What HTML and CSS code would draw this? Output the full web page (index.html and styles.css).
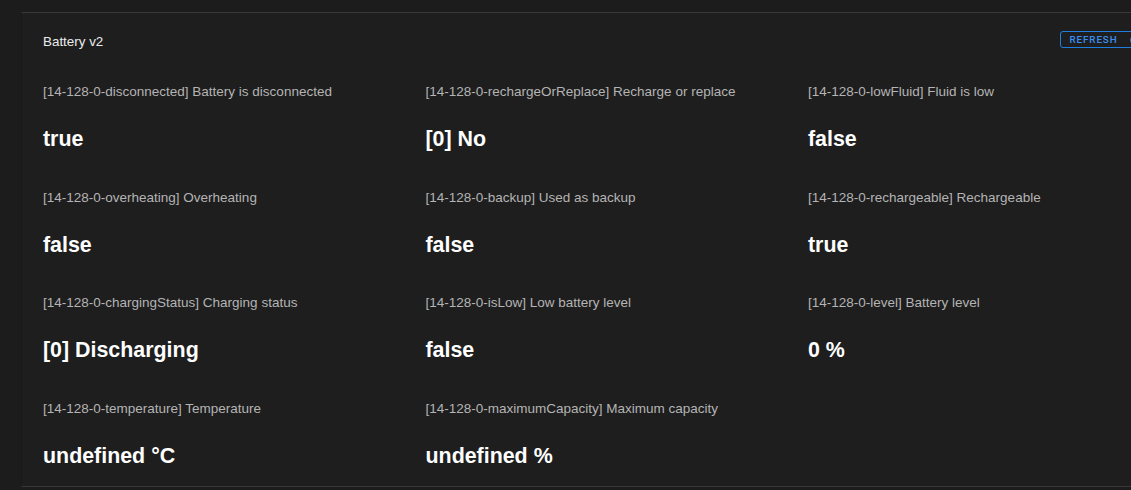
FILE: index.html
```html
<!DOCTYPE html>
<html lang="en">
<head>
    <meta charset="UTF-8">
    <meta name="viewport" content="width=device-width, initial-scale=1.0">
    <title>Battery v2</title>
    <link rel="stylesheet" href="styles.css">
</head>
<body>
    <div class="page">
        <section class="card">
            <header class="card-header">
                <h2 class="card-title">Battery v2</h2>
                <button type="button" class="refresh-btn">
                    REFRESH
                    <svg class="refresh-icon" viewBox="0 0 24 24" width="14" height="14">
                        <path d="M17.65 6.35A7.96 7.96 0 0 0 12 4a8 8 0 1 0 7.730 10h-2.08A6 6 0 1 1 12 6c1.66 0 3.14.69 4.22 1.78L13 11h7V4z" fill="currentColor"/>
                    </svg>
                </button>
            </header>
            <div class="values">
                <div class="value-item">
                    <div class="value-label">[14-128-0-disconnected] Battery is disconnected</div>
                    <div class="value-text">true</div>
                </div>
                <div class="value-item">
                    <div class="value-label">[14-128-0-rechargeOrReplace] Recharge or replace</div>
                    <div class="value-text">[0] No</div>
                </div>
                <div class="value-item">
                    <div class="value-label">[14-128-0-lowFluid] Fluid is low</div>
                    <div class="value-text">false</div>
                </div>
                <div class="value-item">
                    <div class="value-label">[14-128-0-overheating] Overheating</div>
                    <div class="value-text">false</div>
                </div>
                <div class="value-item">
                    <div class="value-label">[14-128-0-backup] Used as backup</div>
                    <div class="value-text">false</div>
                </div>
                <div class="value-item">
                    <div class="value-label">[14-128-0-rechargeable] Rechargeable</div>
                    <div class="value-text">true</div>
                </div>
                <div class="value-item">
                    <div class="value-label">[14-128-0-chargingStatus] Charging status</div>
                    <div class="value-text">[0] Discharging</div>
                </div>
                <div class="value-item">
                    <div class="value-label">[14-128-0-isLow] Low battery level</div>
                    <div class="value-text">false</div>
                </div>
                <div class="value-item">
                    <div class="value-label">[14-128-0-level] Battery level</div>
                    <div class="value-text">0 %</div>
                </div>
                <div class="value-item">
                    <div class="value-label">[14-128-0-temperature] Temperature</div>
                    <div class="value-text">undefined °C</div>
                </div>
                <div class="value-item">
                    <div class="value-label">[14-128-0-maximumCapacity] Maximum capacity</div>
                    <div class="value-text">undefined %</div>
                </div>
            </div>
        </section>
    </div>
</body>
</html>
```

FILE: styles.css
```css
body {
    font-family: "Liberation Sans", Arial, sans-serif;
    background-color: #1c1c1c;
    color: #fff;
    margin: 0;
    padding: 0;
    overflow: hidden;
}

.page {
    padding: 12px 0 0 21px;
    overflow: hidden;
}

.card {
    width: 1147.5px;
    padding: 12px 21px 17px 21px;
    background-color: #1e1e1e;
    border-top: 1px solid #383838;
    border-bottom: 1px solid #383838;
    border-left: 1px solid #181818;
}

.card-header {
    display: flex;
    align-items: center;
    justify-content: space-between;
    height: 32px;
    margin-bottom: 27px;
}

.card-title {
    margin: 0;
    font-size: 13.4px;
    font-weight: normal;
    color: #ececec;
}

.refresh-btn {
    display: flex;
    align-items: center;
    gap: 10px;
    align-self: flex-start;
    height: 17px;
    margin-top: 6px;
    padding: 0 48px 0 9px;
    background: none;
    border: 1px solid #1e7fe0;
    border-radius: 3px;
    color: #3a8ef0;
    font-family: Roboto, "Liberation Sans", sans-serif;
    font-size: 9.8px;
    font-weight: 500;
    letter-spacing: 0.9px;
    cursor: pointer;
}

.refresh-icon {
    display: block;
}

.values {
    display: grid;
    grid-template-columns: repeat(3, 382.5px);
    row-gap: 37.5px;
}

.value-label {
    font-size: 13.5px;
    line-height: 16px;
    color: #b4b4b4;
    margin-bottom: 27px;
}

.value-text {
    font-size: 21.4px;
    line-height: 25px;
    font-weight: bold;
    color: #fff;
}
```
